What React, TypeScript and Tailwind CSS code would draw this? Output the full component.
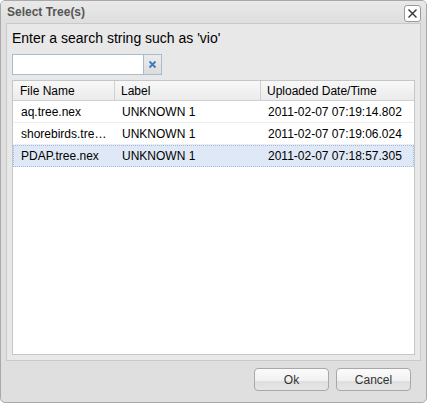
import React from 'react'

const rows = [
  { name: 'aq.tree.nex', label: 'UNKNOWN 1', date: '2011-02-07 07:19:14.802' },
  { name: 'shorebirds.tree.nex', label: 'UNKNOWN 1', date: '2011-02-07 07:19:06.024' },
  { name: 'PDAP.tree.nex', label: 'UNKNOWN 1', date: '2011-02-07 07:18:57.305', selected: true },
]

export default function App() {
  return (
    <div className="w-[427px] h-[403px] bg-white" style={{ fontFamily: '"Liberation Sans", Arial, sans-serif' }}>
      <div className="w-[427px] h-[403px] border border-[#a9a9a9] rounded-[5px] bg-[#dfdfdf] flex flex-col overflow-hidden">
        {/* title bar */}
        <div className="h-[22px] flex items-center justify-between pl-[6px] pr-[5px] bg-gradient-to-b from-[#e9e9e9] to-[#dedede]">
          <span className="text-[12px] font-bold text-[#555]">Select Tree(s)</span>
          <button className="w-[17px] h-[17px] mt-[2px] bg-white border border-[#9a9a9a] rounded-[3px] flex items-center justify-center">
            <svg width="11" height="11" viewBox="0 0 11 11">
              <path d="M1.5 1.5 L9.5 9.5 M9.5 1.5 L1.5 9.5" stroke="#333" strokeWidth="1.4" />
            </svg>
          </button>
        </div>

        {/* body panel */}
        <div className="mx-[5px] h-[338px] border border-[#c9c9c9] bg-[#e8e8e8] flex flex-col px-[5px] pt-[2px] pb-[5px]">
          <div className="text-[14px] text-black leading-[20px] h-[24px] flex items-center">
            Enter a search string such as 'vio'
          </div>
          <div className="mt-[4px] flex h-[21px] w-[150px]">
            <input className="w-[132px] h-[21px] bg-white border border-[#a9bbd0] outline-none text-[12px] px-1" />
            <button className="w-[18px] h-[21px] border border-l-0 border-[#a9bbd0] bg-gradient-to-b from-[#ececec] to-[#dcdcdc] flex items-center justify-center">
              <svg width="9" height="9" viewBox="0 0 9 9">
                <path d="M1.5 1.5 L7.5 7.5 M7.5 1.5 L1.5 7.5" stroke="#3d7bbf" strokeWidth="1.8" />
              </svg>
            </button>
          </div>

          {/* grid */}
          <div className="mt-[5px] flex-1 border border-[#c6c6c6] bg-white flex flex-col">
            <div className="h-[20px] flex text-[12px] text-black bg-gradient-to-b from-[#f8f8f8] to-[#ebebeb] border-b border-[#d0d0d0]">
              <div className="w-[102px] pl-[7px] flex items-center border-r border-[#d0d0d0]">File Name</div>
              <div className="w-[146px] pl-[6px] flex items-center border-r border-[#d0d0d0]">Label</div>
              <div className="flex-1 pl-[6px] flex items-center">Uploaded Date/Time</div>
            </div>
            {rows.map((r) => (
              <div
                key={r.name}
                className={
                  r.selected
                    ? 'h-[22px] flex text-[12px] text-black bg-[#dfe8f6] border border-dotted border-[#a3bae9]'
                    : 'h-[22px] flex text-[12px] text-black border border-transparent border-b-[#ededed]'
                }
              >
                <div className="w-[102px] pl-[7px] pr-[3px] flex items-center">
                  <span className="truncate">{r.name}</span>
                </div>
                <div className="w-[146px] pl-[6px] flex items-center">{r.label}</div>
                <div className="flex-1 pl-[6px] flex items-center">{r.date}</div>
              </div>
            ))}
          </div>
        </div>

        {/* footer */}
        <div className="flex-1 flex justify-end items-start pt-[7px] pr-[15px] gap-[7px]">
          {['Ok', 'Cancel'].map((t) => (
            <button
              key={t}
              className="w-[75px] h-[23px] rounded-[4px] border border-[#a8a8a8] text-[12px] text-[#333] bg-[linear-gradient(to_bottom,#fbfbfb_0%,#f1f1f1_55%,#dedede_56%,#e6e6e6_100%)]"
            >
              {t}
            </button>
          ))}
        </div>
      </div>
    </div>
  )
}
